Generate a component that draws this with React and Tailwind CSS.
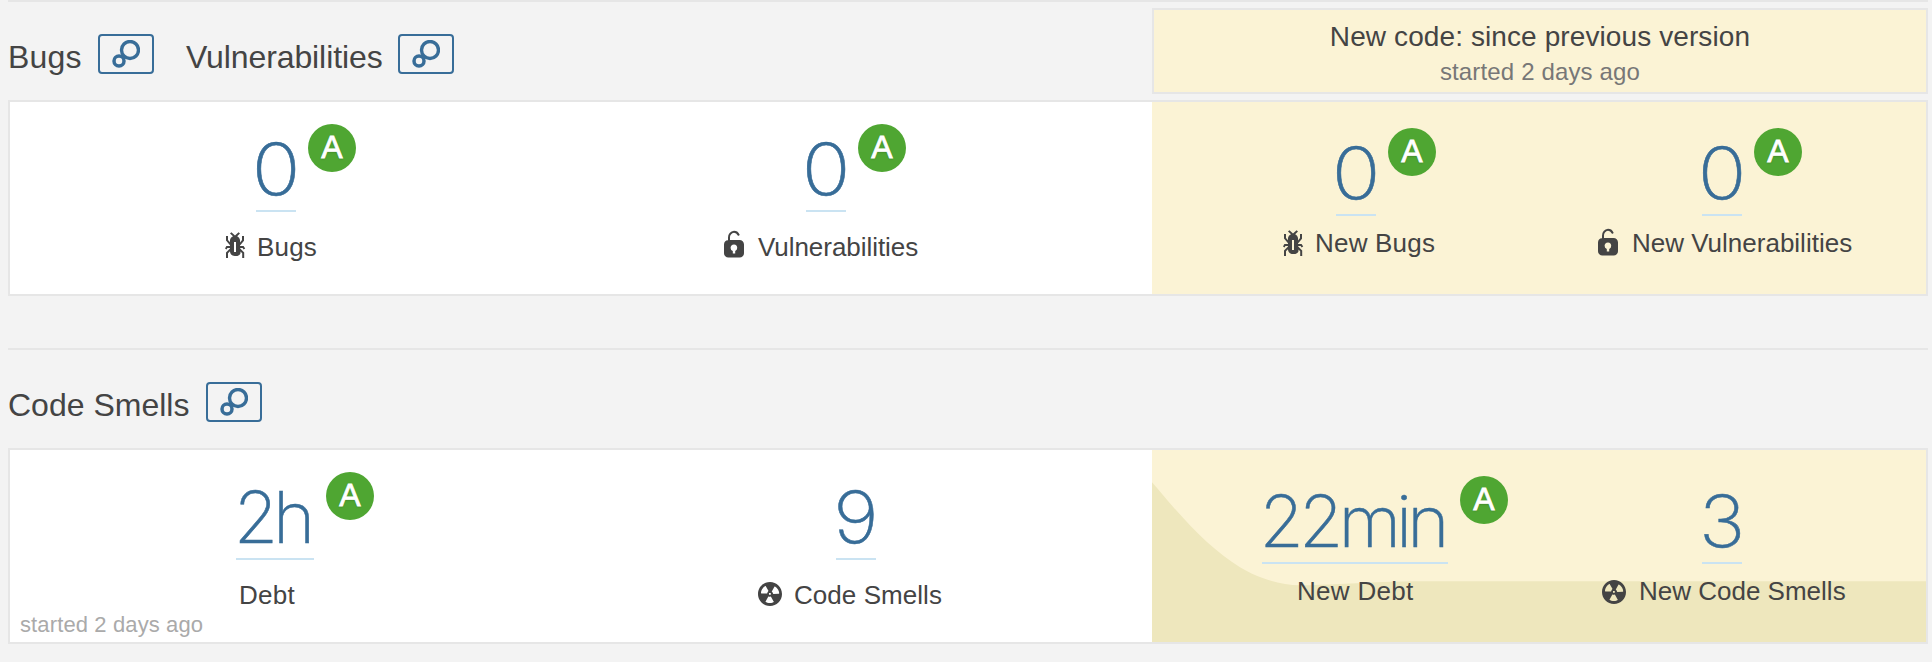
const BUG =
  'M11 9h1.3l.5.8.8-.5-.8-1.3H11v-.3l2-2.3V3h-1v2l-1 1.2V5c-.1-.8-.7-1.5-1.4-1.9L11 1.8l-.7-.7-1.8 1.6-1.8-1.6-.7.7 1.5 1.3C6.7 3.5 6.1 4.2 6 5v1.1L5 5V3H4v2.3l2 2.3V8H4.2l-.7 1.2.8.5.4-.7H6v.3l-2 1.9V14h1v-2.4l1-1C6 12 7.1 13 8.4 13h.8c.7 0 1.4-.3 1.8-.9.3-.4.3-.9.2-1.4l.9.9V14h1v-2.8l-2-1.9V9zm-2 2H8V6h1v5z';
const LOCK =
  'M10.8 5H6V3.9a2.28 2.28 0 0 1 2-2.5 2.22 2.22 0 0 1 1.8 1.2.48.48 0 0 0 .7.2.48.48 0 0 0 .2-.7A3 3 0 0 0 8 .4a3.34 3.34 0 0 0-3 3.5v1.2a2.16 2.16 0 0 0-2 2.1v4.4a2.22 2.22 0 0 0 2.2 2.2h5.6a2.22 2.22 0 0 0 2.2-2.2V7.2A2.22 2.22 0 0 0 10.8 5zm-2.2 5.5v1.2H7.4v-1.2a1.66 1.66 0 0 1-1.1-1.6A1.75 1.75 0 0 1 8 7.2a1.71 1.71 0 0 1 1.6 1.7 1.66 1.66 0 0 1-1 1.6z';
const SMELL =
  'M8 2C4.7 2 2 4.7 2 8s2.7 6 6 6 6-2.7 6-6-2.7-6-6-6zm-.5 5.5h.9v.9h-.9v-.9zm-3.8.2c-.1 0-.2-.1-.2-.2 0-.4.1-1.2.6-2S5.3 4.2 5.6 4c.2 0 .3 0 .3.1l1.3 2.3c0 .1 0 .2-.1.2-.1.2-.2.3-.3.5-.1.2-.2.4-.2.5 0 .1-.1.2-.2.2l-2.7-.1zM9.900 12c-.3.2-1.1.5-2 .5-.9 0-1.7-.3-2-.5-.1 0-.1-.2-.1-.3l1.3-2.3c0-.1.1-.1.2-.1.2.1.3.1.5.1s.4 0 .5-.1c.1 0 .2 0 .2.1l1.3 2.3c.2.2.2.3.1.3zm2.5-4.1L9.700 8c-.1 0-.2-.1-.2-.2 0-.2-.1-.4-.2-.5 0-.1-.2-.3-.3-.4-.1 0-.1-.1-.1-.2l1.3-2.3c.1-.1.2-.1.3-.1.3.2 1 .7 1.5 1.5s.6 1.6.6 2c0 0-.1.1-.2.1z';

function BubblesButton({ className }) {
  return (
    <button className={`flex h-10 w-14 shrink-0 items-center justify-center rounded-[4px] border-2 border-[#386d98] ${className}`}>
      <svg className="h-7 w-7" viewBox="0 0 28 28" fill="none" stroke="#386d98">
        <circle cx="18" cy="10" r="8.500" strokeWidth="3.400" />
        <circle cx="7" cy="21" r="5" strokeWidth="3.500" />
      </svg>
    </button>
  );
}

function Measure({ value, rating, label, icon, valueClass, numberClass = 'w-10', labelClass, iconClass, textClass = '' }) {
  return (
    <div className="min-w-0 flex-1">
      <div className={`flex h-[88px] items-start gap-3 ${valueClass}`}>
        <a className="flex h-[88px] shrink-0 justify-center border-b-2 border-[#cae3f2] font-['Inter'] text-[72px] leading-[90px] font-extralight whitespace-nowrap text-[#386d98] [-webkit-text-stroke:0.5px_#386d98]">
          <span className={`flex justify-center ${numberClass}`}>{value}</span>
        </a>
        {rating && (
          <span className="h-12 w-12 shrink-0 rounded-full bg-[#4fa632] text-center text-[32px] leading-[47px] text-white [-webkit-text-stroke:0.8px_white] [text-shadow:0_1px_2px_rgba(0,0,0,0.25)]">
            {rating}
          </span>
        )}
      </div>
      <div className={`flex h-8 items-center text-[26px] leading-8 whitespace-nowrap text-[#444] ${labelClass}`}>
        {icon && (
          <svg className={`h-8 w-8 shrink-0 ${iconClass}`} viewBox="0 0 16 16" fill="#444">
            <path d={icon} />
          </svg>
        )}
        <span className={textClass}>{label}</span>
      </div>
    </div>
  );
}

function Panel({ children, fresh, footer, chart }) {
  return (
    <div className="flex h-49 border-2 border-[#e6e6e6] bg-white">
      <div className="relative flex w-[1142px] shrink-0 pt-[22px]">
        {children}
        {footer && (
          <span className="absolute bottom-0.5 left-2.5 text-[22px] leading-[30px] tracking-[0.12px] text-[#aaa]">{footer}</span>
        )}
      </div>
      <div className="relative flex flex-1 bg-[#fbf3d5]">
        {chart}
        <div className="relative flex flex-1 pt-[26px]">{fresh}</div>
      </div>
    </div>
  );
}

export default function App() {
  return (
    <main className="h-[662px] w-[1932px] overflow-hidden bg-[#f3f3f3] pr-1 pl-2 font-['Liberation_Sans',Arial,sans-serif] antialiased">
      <section>
        <header className="flex h-[100px] items-start border-t-2 border-[#e6e6e6] text-[32px] leading-10 whitespace-nowrap text-[#444]">
          <h2 className="mt-[35px] w-[90px] tracking-[0.2px]">Bugs</h2>
          <BubblesButton className="mt-8" />
          <h2 className="mt-[35px] ml-8 w-[212px] tracking-[-0.1px]">Vulnerabilities</h2>
          <BubblesButton className="mt-8" />
          <div className="mt-1.5 ml-auto h-[86px] w-[776px] border-2 border-[#e6e6e6] bg-[#fbf3d5] pt-[9px] text-center">
            <div className="text-[28px] leading-9 tracking-[0.1px]">New code: since previous version</div>
            <div className="text-[24px] leading-[34px] tracking-[0.15px] text-[#777]">started 2 days ago</div>
          </div>
        </header>
        <Panel
          fresh={
            <>
              <Measure value="0" rating="A" label="New Bugs" icon={BUG} valueClass="pl-[184px]" numberClass="w-10 scale-x-[1.12]" labelClass="mt-[11px] pl-[124px]" iconClass="mr-[7px] translate-y-px" textClass="tracking-[0.2px]" />
              <Measure value="0" rating="A" label="New Vulnerabilities" icon={LOCK} valueClass="pl-[163px]" numberClass="w-10 scale-x-[1.12]" labelClass="mt-[11px] pl-[53px]" iconClass="mr-2 translate-y-px" />
            </>
          }
        >
          <Measure value="0" rating="A" label="Bugs" icon={BUG} valueClass="pl-[246px]" numberClass="w-10 scale-x-[1.12]" labelClass="mt-[19px] pl-[208px]" iconClass="mr-[7px] -translate-y-px" textClass="tracking-[0.2px]" />
          <Measure value="0" rating="A" label="Vulnerabilities" icon={LOCK} valueClass="pl-[225px]" numberClass="w-10 scale-x-[1.12]" labelClass="mt-[19px] pl-[137px]" iconClass="mr-2 -translate-y-px" textClass="tracking-[-0.05px]" />
        </Panel>
      </section>

      <section className="mt-[52px]">
        <header className="flex h-[100px] items-start border-t-2 border-[#e6e6e6] text-[32px] leading-10 whitespace-nowrap text-[#444]">
          <h2 className="mt-[35px] w-[198px]">Code Smells</h2>
          <BubblesButton className="mt-8" />
        </header>
        <Panel
          footer="started 2 days ago"
          chart={
            <svg className="absolute inset-0 h-full w-full" viewBox="0 0 774 192" preserveAspectRatio="none">
              <path
                fill="#eee7bd"
                d="M0 32.3C7 40 14 49 21 56.7C32 69 43 81 54.7 91.7C66 102 77 110 88 117.3C96 122 103 125.500 111.3 128.3C123 132.500 136 135.300 148 135.300C162 135.300 174 134.500 188 134C218 132.600 240 131.300 275 131.300H774V192H0Z"
              />
            </svg>
          }
          fresh={
            <>
              <Measure value="22min" rating="A" label="New Debt" valueClass="pl-[110px]" numberClass="w-[186px] pr-1.5 tracking-[-5px]" labelClass="mt-[11px] pl-[145px]" textClass="tracking-[0.3px]" />
              <Measure value="3" label="New Code Smells" icon={SMELL} valueClass="pl-[163px]" numberClass="w-10 scale-x-[1.08]" labelClass="mt-[11px] pl-[59px]" iconClass="mr-[9px] translate-y-px" />
            </>
          }
        >
          <Measure value="2h" rating="A" label="Debt" valueClass="pl-[226px]" numberClass="w-[78px] pr-1.5 tracking-[-5px]" labelClass="mt-[19px] pl-[229px]" textClass="tracking-[0.3px]" />
          <Measure value="9" label="Code Smells" icon={SMELL} valueClass="pl-[255px]" numberClass="w-10 scale-x-[1.08]" labelClass="mt-[19px] pl-[173px]" iconClass="mr-2 -translate-y-px" textClass="tracking-[0.05px]" />
        </Panel>
      </section>
    </main>
  );
}
